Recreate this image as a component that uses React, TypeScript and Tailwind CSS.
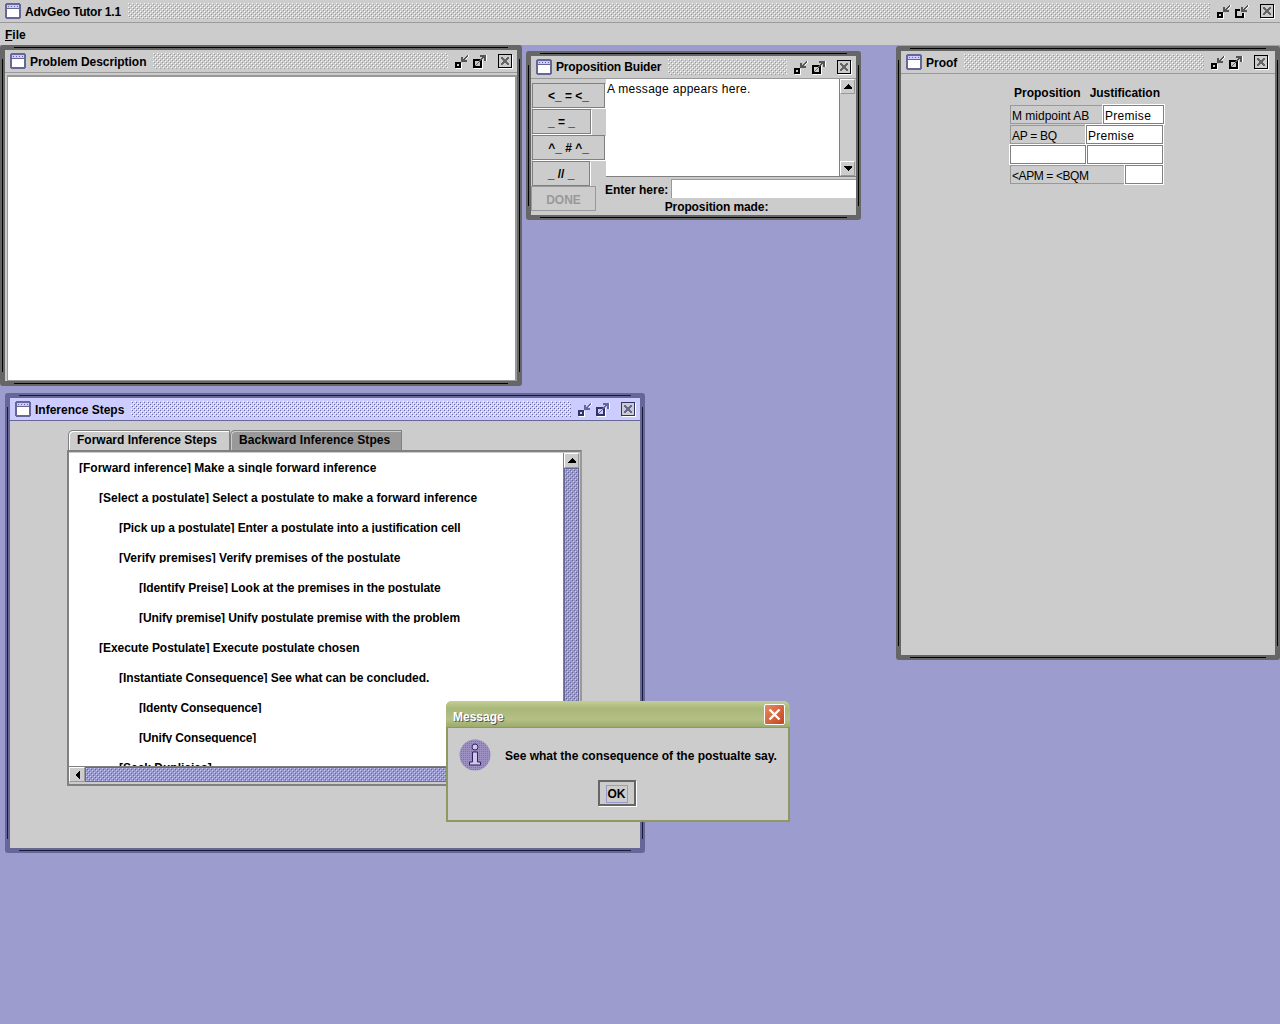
import React, { useId } from "react";

function Bumps({ light = "#ffffff", dark = "#999999", className = "" }: { light?: string; dark?: string; className?: string }) {
  const id = useId().replace(/:/g, "");
  return (
    <svg className={className} shapeRendering="crispEdges">
      <defs>
        <pattern id={id} width="4" height="4" patternUnits="userSpaceOnUse">
          <rect x="0" y="0" width="1" height="1" fill={light} />
          <rect x="1" y="1" width="1" height="1" fill={dark} />
          <rect x="2" y="2" width="1" height="1" fill={light} />
          <rect x="3" y="3" width="1" height="1" fill={dark} />
        </pattern>
      </defs>
      <rect width="100%" height="100%" fill={`url(#${id})`} />
    </svg>
  );
}

function WinIcon() {
  return (
    <svg width="16" height="16" viewBox="0 0 16 16" shapeRendering="crispEdges" className="shrink-0">
      <rect x="1" y="0" width="14" height="16" fill="#666699" />
      <rect x="0" y="1" width="16" height="14" fill="#666699" />
      <rect x="2" y="2" width="12" height="3" fill="#ccccff" />
      <rect x="3" y="3" width="1" height="1" fill="#666699" />
      <rect x="6" y="3" width="1" height="1" fill="#666699" />
      <rect x="9" y="3" width="1" height="1" fill="#666699" />
      <rect x="12" y="3" width="1" height="1" fill="#666699" />
      <rect x="2" y="6" width="12" height="8" fill="#ffffff" />
    </svg>
  );
}

function Iconify({ c, restore = false }: { c: string; restore?: boolean }) {
  return (
    <svg width="15" height="15" viewBox="0 0 15 15" shapeRendering="crispEdges" className="shrink-0">
      {restore ? (
        <>
          <path d="M1 5H6V7H3V12H8V9H10V14H1Z" fill={c} />
          <path d="M2 14H11V9H10V14H2Z" fill="#ffffff" />
        </>
      ) : (
        <>
          <path d="M1 8H7V14H1ZM3 10V12H5V10Z" fill={c} />
          <path d="M7 9H8V15H2V14H7Z" fill="#ffffff" />
        </>
      )}
      <path d="M7 3H9V5H10V4H11V3H12V2H13V1H14V3H13V4H12V5H11V6H13V8H7Z" fill={c === "#000000" ? "#555555" : "#666699"} />
      <path d="M14 1H15V3H14ZM13 3H14V4H13ZM12 4H13V5H12Z" fill="#ffffff" />
    </svg>
  );
}

function Maxim({ c }: { c: string }) {
  return (
    <svg width="15" height="15" viewBox="0 0 15 15" shapeRendering="crispEdges" className="shrink-0">
      <path d="M1 5H10V14H1ZM3 7V12H8V7Z" fill={c} />
      <path d="M3 12V11H4V10H5V9H6V8H7V9H6V10H5V11H4V12Z" fill="#666666" />
      <path d="M10 6H11V15H2V14H10Z" fill="#ffffff" />
      <path d="M8 1H14V7H12V4H11V5H10V6H9V7H8V8H7V6H8V5H9V4H10V3H8Z" fill={c === "#000000" ? "#555555" : "#666699"} />
      <path d="M14 1H15V7H14Z" fill="#ffffff" />
    </svg>
  );
}

function CloseI({ c }: { c: string }) {
  return (
    <svg width="15" height="15" viewBox="0 0 15 15" shapeRendering="crispEdges" className="shrink-0">
      <rect x="1" y="1" width="14" height="14" fill="#ffffff" />
      <rect x="0" y="0" width="14" height="14" fill={c} />
      <rect x="1" y="1" width="12" height="12" fill="#cccccc" />
      <path d="M3 3H5V4H6V5H8V4H9V3H11V5H10V6H9V8H10V9H11V11H9V10H8V9H6V10H5V11H3V9H4V8H5V6H4V5H3Z" fill={c === "#000000" ? "#666666" : "#666699"} />
    </svg>
  );
}

function Win({
  x, y, w, h, title, active = false, bar, tt = "mt-[2px]", children,
}: {
  x: string; y?: string; w?: string; h?: string; title: string; active?: boolean; bar: string; tt?: string; children: React.ReactNode;
}) {
  const frame = active ? "border-[#666699]" : "border-[#666666]";
  const c = active ? "#333366" : "#000000";
  const line = active ? "bg-[#1a1a33]" : "bg-black";
  return (
    <div className={`absolute ${x} ${y} ${w} ${h} border-[5px] ${frame} flex flex-col rounded-[3px] bg-[#cccccc]`}>
      <div className={`absolute -top-[3px] left-[9px] right-[9px] h-px ${line}`} />
      <div className={`absolute -bottom-[3px] left-[9px] right-[9px] h-px ${line}`} />
      <div className={`absolute -left-[3px] top-[9px] bottom-[9px] w-px ${line}`} />
      <div className={`absolute -right-[3px] top-[9px] bottom-[9px] w-px ${line}`} />
      <div className={`h-[23px] shrink-0 flex items-center pl-[5px] pr-[4px] border-b ${active ? "bg-[#ccccff] border-[#666699]" : "bg-[#cccccc] border-[#999999]"}`}>
        <WinIcon />
        <span className={`ml-[4px] text-[12px] font-bold text-black whitespace-nowrap ${tt}`}>{title}</span>
        <Bumps light="#ffffff" dark={active ? "#666699" : "#999999"} className={`ml-[7px] mr-[6px] h-[16px] ${bar}`} />
        <Iconify c={c} />
        <span className="w-[3px]" />
        <Maxim c={c} />
        <span className="w-[11px]" />
        <CloseI c={c} />
      </div>
      {children}
    </div>
  );
}

const sbBtn = "w-[15px] h-[15px] bg-[#cccccc] border-t border-l border-white border-r border-b border-r-[#999999] border-b-[#999999] flex items-center justify-center";

function Arrow({ dir }: { dir: "up" | "down" | "left" }) {
  const d = dir === "up" ? "M4 0L8 4V5H0V4Z" : dir === "down" ? "M0 0H8V1L4 5Z" : "M0 4L4 0H5V8H4Z";
  const s = dir === "left" ? { w: 5, h: 8 } : { w: 8, h: 5 };
  return (
    <svg width={s.w} height={s.h} viewBox={`0 0 ${s.w} ${s.h}`} shapeRendering="crispEdges">
      <path d={d} fill="#000" />
    </svg>
  );
}

function PropBtn({ label, w }: { label: string; w: string }) {
  return (
    <div className={`${w} h-[25px] shrink-0 bg-[#cccccc] border border-[#808080] shadow-[1px_1px_0_#ffffff] flex items-center justify-center text-[12px] font-bold text-black`}>
      <span className="whitespace-pre">{label}</span>
    </div>
  );
}

function Cell({ text, w, white = false, tr = "" }: { text?: string; w: string; white?: boolean; tr?: string }) {
  return (
    <div
      className={`${w} h-[19px] shrink-0 flex items-center pl-[1px] pt-[2px] text-[12px] leading-none text-black whitespace-nowrap ${tr} ${
        white ? "bg-white border border-[#808080] outline outline-1 outline-white" : "bg-[#cccccc] border border-[#999999]"
      }`}
    >
      {text}
    </div>
  );
}

const steps: [string, string, string][] = [
  ["pl-[10px]", "", "[Forward inference] Make a single forward inference"],
  ["pl-[30px]", "", "[Select a postulate] Select a postulate to make a forward inference"],
  ["pl-[50px]", "tracking-[-0.09px]", "[Pick up a postulate] Enter a postulate into a justification cell"],
  ["pl-[50px]", "", "[Verify premises] Verify premises of the postulate"],
  ["pl-[70px]", "tracking-[-0.07px]", "[Identify Preise] Look at the premises in the postulate"],
  ["pl-[70px]", "tracking-[-0.09px]", "[Unify premise] Unify postulate premise with the problem"],
  ["pl-[30px]", "tracking-[-0.05px]", "[Execute Postulate] Execute postulate chosen"],
  ["pl-[50px]", "tracking-[-0.06px]", "[Instantiate Consequence] See what can be concluded."],
  ["pl-[70px]", "tracking-[-0.15px]", "[Identy Consequence]"],
  ["pl-[70px]", "tracking-[-0.15px]", "[Unify Consequence]"],
  ["pl-[50px]", "", "[Seek Duplicias]"],
];

export default function App() {
  return (
    <div className="relative w-[1280px] h-[1024px] overflow-hidden flex flex-col bg-[#9c9ccf] font-['Liberation_Sans',Arial,sans-serif]">
      <div className="h-[23px] shrink-0 bg-[#cccccc] border-b border-[#999999] flex items-center pl-[5px] pr-[4px]">
        <WinIcon />
        <span className="ml-[4px] mt-[2px] text-[12px] font-bold text-black whitespace-nowrap tracking-[-0.2px]">AdvGeo Tutor 1.1</span>
        <Bumps className="ml-[7px] mr-[6px] h-[16px] w-[1082px]" />
        <Iconify c="#000000" />
        <span className="w-[3px]" />
        <Iconify c="#000000" restore />
        <span className="w-[11px]" />
        <CloseI c="#000000" />
      </div>
      <div className="h-[22px] shrink-0 bg-[#cccccc] flex items-center pl-[5px] pt-[2px] text-[12px] font-bold text-black">
        <span><span className="underline">F</span>ile</span>
      </div>
      <div className="relative flex-1 bg-[#9c9ccf]">
        <Win x="left-0" y="top-0" w="w-[522px]" h="h-[341px]" title="Problem Description" bar="w-[295px]" tt="mt-[2px] tracking-[-0.05px]">
          <div className="flex-1 ml-[2px] mt-[2px] bg-white border-t-2 border-l border-b border-r-2 border-[#999999]" />
        </Win>

        <Win x="left-[526px]" y="top-[6px]" w="w-[335px]" h="h-[169px]" title="Proposition Buider" bar="w-[120px]" tt="tracking-[-0.15px]">
          <div className="flex-1 flex min-h-0 -mt-px">
            <div className="w-[75px] shrink-0 flex flex-col items-start gap-[1px] pl-[1px] pt-[5px]">
              <PropBtn label="<_ = <_" w="w-[73px]" />
              <PropBtn label="_ = _" w="w-[59px]" />
              <PropBtn label="^_ # ^_" w="w-[73px]" />
              <PropBtn label="_ // _" w="w-[58px]" />
              <div className="w-[65px] h-[25px] -mt-px -ml-px pt-[2px] border border-[#999999] flex items-center justify-center text-[12px] font-bold text-[#999999]">DONE</div>
            </div>
            <div className="flex-1 flex flex-col pt-[1px]">
              <div className="h-[98px] flex border-b border-[#808080] shrink-0">
                <div className="flex-1 bg-white pt-[2px] pl-px text-[12px] leading-[16px] text-black tracking-[0.3px] whitespace-nowrap">A message appears here.</div>
                <div className="w-[17px] flex flex-col border-l border-[#808080] bg-[#cccccc]">
                  <div className={sbBtn}><Arrow dir="up" /></div>
                  <div className="flex-1" />
                  <div className={sbBtn}><Arrow dir="down" /></div>
                </div>
              </div>
              <div className="flex items-center mt-[2px] h-[19px] shrink-0 -ml-px">
                <span className="text-[12px] pt-[2px] font-bold text-black w-[66px] whitespace-nowrap">Enter here:</span>
                <div className="flex-1 h-[19px] bg-white border-l border-t border-[#999999]" />
              </div>
              <div className="text-center text-[12px] leading-[18px] font-bold text-black whitespace-nowrap tracking-[-0.1px] -ml-[1px] mr-[28px]">Proposition made:</div>
            </div>
          </div>
        </Win>

        <Win x="left-[896px]" y="top-[1px]" w="w-[384px]" h="h-[614px]" title="Proof" bar="w-[240px]">
          <div className="flex-1 pl-[109px] pt-[11px]">
            <div className="flex text-[12px] font-bold text-black h-[20px] items-start whitespace-nowrap leading-[16px]">
              <span className="ml-[4px]">Proposition</span>
              <span className="ml-[9px] tracking-[-0.03px]">Justification</span>
            </div>
            <div className="flex flex-col gap-[1px]">
              <div className="flex"><Cell text="M midpoint AB" w="w-[93px]" /><Cell text="Premise" w="w-[61px]" white tr="tracking-[0.3px]" /></div>
              <div className="flex"><Cell text="AP = BQ" w="w-[76px]" tr="tracking-[-0.3px]" /><Cell text="Premise" w="w-[77px]" white tr="tracking-[0.3px]" /></div>
              <div className="flex gap-[1px]"><Cell w="w-[76px]" white /><Cell w="w-[76px]" white /></div>
              <div className="flex"><Cell text="<APM = <BQM" w="w-[115px]" tr="tracking-[-0.4px]" /><Cell w="w-[38px]" white /></div>
            </div>
          </div>
        </Win>

        <Win x="left-[5px]" y="top-[348px]" w="w-[640px]" h="h-[460px]" title="Inference Steps" active bar="w-[440px]">
          <div className="flex-1 pl-[57px] pt-[9px]">
            <div className="flex h-[20px] pl-[1px] items-end">
              <div className="w-[162px] h-[20px] pb-[2px] bg-[#cccccc] border-t border-l border-r border-[#808080] rounded-tl-[5px] flex items-center pl-[8px] text-[12px] font-bold text-black shadow-[inset_1px_1px_0_#ffffff]">Forward Inference Steps</div>
              <div className="w-[172px] h-[20px] pb-[2px] bg-[#999999] border-t border-l border-r border-[#808080] rounded-tl-[5px] flex items-center pl-[8px] text-[12px] font-bold text-black tracking-[0.08px] shadow-[inset_1px_1px_0_#cccccc]">Backward Inference Stpes</div>
            </div>
            <div className="w-[515px] h-[336px] border-2 border-[#808080] border-r-[#999999] bg-[#cccccc] pt-[1px]">
              <div className="flex h-[313px]">
                <div className="w-[494px] bg-white overflow-hidden pt-[8px]">
                  {steps.map(([p, tr, t]) => (
                    <div key={t} className={`${p} h-[30px] text-[12px] font-bold leading-[15px] text-black whitespace-nowrap`}>
                      <div className={`h-[12px] overflow-hidden ${tr}`}>{t}</div>
                    </div>
                  ))}
                </div>
                <div className="w-[16px] flex flex-col border-l border-[#808080] bg-[#cccccc]">
                  <div className={sbBtn}><Arrow dir="up" /></div>
                  <div className="flex-1 border border-[#666699] bg-[#9999cc] overflow-hidden">
                    <Bumps light="#ccccff" dark="#666699" className="w-full h-full" />
                  </div>
                </div>
              </div>
              <div className="flex h-[16px] border-t border-[#808080]">
                <div className={`${sbBtn} w-[16px]`}><Arrow dir="left" /></div>
                <div className="flex-1 border border-[#666699] bg-[#9999cc] overflow-hidden">
                  <Bumps light="#ccccff" dark="#666699" className="w-full h-full" />
                </div>
              </div>
            </div>
          </div>
        </Win>

        <div className="absolute left-[446px] top-[656px] w-[344px] h-[121px] bg-[#cccccc] border-2 border-t-0 border-[#8c9a62] rounded-t-[6px] flex flex-col">
          <div className="h-[27px] -mx-[2px] shrink-0 rounded-t-[6px] bg-[linear-gradient(#c3cf95_0%,#a9b77a_30%,#b4c086_70%,#9cab6c_100%)] border-b border-[#8c9a62] flex items-center justify-between pl-[7px] pr-[5px]">
            <span className="mt-[5px] text-[12px] font-bold text-white [text-shadow:1px_1px_0_#555]">Message</span>
            <div className="w-[21px] h-[21px] bg-[linear-gradient(135deg,#e88a60,#c2451f)] border border-white rounded-[2px] flex items-center justify-center">
              <svg width="13" height="13" viewBox="0 0 13 13">
                <path d="M1.5 1.5L11.5 11.5M11.5 1.5L1.5 11.5" stroke="#ffffff" strokeWidth="2.4" />
              </svg>
            </div>
          </div>
          <div className="flex items-start pl-[11px] pt-[11px]">
            <svg width="32" height="32" viewBox="0 0 32 32" className="shrink-0">
              <defs>
                <pattern id="dotI" width="2" height="2" patternUnits="userSpaceOnUse">
                  <rect width="2" height="2" fill="#9c90c0" />
                  <rect width="1" height="1" fill="#7f72a8" />
                </pattern>
              </defs>
              <circle cx="16" cy="16" r="15.5" fill="url(#dotI)" />
              <circle cx="16" cy="8" r="3" fill="#cfc8e4" stroke="#33206a" />
              <path d="M13.5 13H18.5V23H21.5V26H10.5V23H13.5Z" fill="#cfc8e4" stroke="#33206a" />
            </svg>
            <span className="ml-[14px] mt-[10px] text-[12px] leading-[15px] font-bold text-black whitespace-nowrap">See what the consequence of the postualte say.</span>
          </div>
          <div className="flex justify-center mt-[9px] mr-[3px]">
            <div className="w-[38px] h-[26px] border-2 border-[#666666] shadow-[1px_1px_0_#ffffff] flex items-center justify-center bg-[#cccccc]">
              <span className="mt-[1px] border border-[#9999cc] px-px text-[12px] leading-[16px] font-bold text-black">OK</span>
            </div>
          </div>
        </div>
      </div>
    </div>
  );
}
